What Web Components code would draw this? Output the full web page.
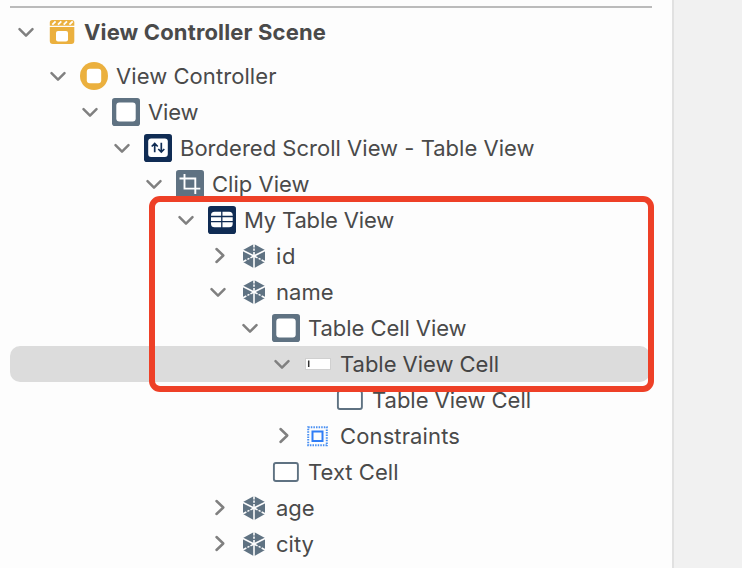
<!DOCTYPE html>
<html lang="en">
<head>
<meta charset="utf-8">
<title>Document Outline</title>
<style>
html,body{margin:0;height:568px;overflow:hidden;background:#fdfdfd}
body{font-family:Inter,"Liberation Sans",sans-serif}
</style>
</head>
<body>
<outline-window></outline-window>
<script>
const SLATE='#5f7282', NAVY='#102c54', GOLD='#ebb03e';
const ICONS={
 scene:`<path fill="${GOLD}" d="M2.800 10H27.300V24a3 3 0 0 1-3 3H5.800a3 3 0 0 1-3-3z"/><path d="M2.800 8.700V5.500a2.500 2.500 0 0 1 2.500-2.500H24.800a2.500 2.500 0 0 1 2.500 2.500V8.700z" fill="${GOLD}"/><path d="M5.300 7.600l3.300-3.200M11 7.600l3.300-3.200M16.700 7.600l3.300-3.200M22.400 7.600l3.300-3.200" stroke="#fdfdfd" stroke-width="1.900"/><rect x="9" y="14" width="12" height="10.500" rx="2" fill="#fff"/>`,
 controller:`<circle cx="15" cy="15" r="14" fill="${GOLD}"/><rect x="7.800" y="7.800" width="14.400" height="14.400" rx="3" fill="#fff"/>`,
 view:`<rect x="1" y="1" width="28" height="28" rx="2.800" fill="${SLATE}"/><rect x="5.300" y="5.500" width="19.400" height="19" rx="3" fill="#fff"/>`,
 scroll:`<rect x="1" y="1" width="28" height="28" rx="2.800" fill="${NAVY}"/><rect x="5.200" y="5.500" width="19.600" height="18.500" rx="3" fill="#fff"/><g fill="none" stroke="${NAVY}" stroke-width="1.700"><path d="M11.700 19.300V11M8.700 13.500l3-3 3 3M18.300 9.700v8.500M15.300 16l3 3 3-3"/></g>`,
 clip:`<rect x="1" y="1" width="28" height="28" rx="2.800" fill="${SLATE}"/><path d="M4.500 9.500H20.300V25M9.500 5v14.600H25.300" fill="none" stroke="#fff" stroke-width="1.900"/>`,
 table:`<rect x="1" y="1" width="28" height="28" rx="2.800" fill="${NAVY}"/><rect x="4" y="6.700" width="21.700" height="15.600" rx="3.500" fill="#fff"/><path d="M14.800 6v17M4 11.500h22M4 16.700h22" stroke="${NAVY}" stroke-width="1.300"/>`,
 cube:`<path d="M15 3l11 6v12l-11 6.300L4 21V9z" fill="${SLATE}"/><g stroke="#fdfdfd" stroke-width="1.600"><path d="M15 15v13M15 15L3.500 9.300M15 15l11.500-5.700"/><path d="M15 15V3M15 15L4 20.700M15 15l11 5.700" stroke-dasharray="4 1.200 2.200 1.200"/></g>`,
 field:`<rect x="2" y="9" width="26" height="12" fill="#d0d0d0"/><rect x="3" y="10" width="24" height="10" fill="#fff"/><path d="M5.700 11.500v6.500" stroke="#333" stroke-width="1.500"/>`,
 cell:`<rect x="2.900" y="6" width="24" height="18" rx="2" fill="#fff" stroke="${SLATE}" stroke-width="1.900"/>`,
 constraints:`<rect x="5.200" y="6.200" width="18.600" height="18" fill="none" stroke="#4a90f2" stroke-width="2" stroke-dasharray="1.500 1.100"/><rect x="9.500" y="10.500" width="10" height="9.500" fill="none" stroke="#2f7df6" stroke-width="2"/>`
};
class OutlineIcon extends HTMLElement{
 connectedCallback(){
  this.attachShadow({mode:'open'}).innerHTML=`<style>:host{display:block;width:30px;height:30px;flex:none}svg{display:block}</style><svg width="30" height="30" viewBox="0 0 30 30">${ICONS[this.getAttribute('name')]}</svg>`;
 }
}
customElements.define('outline-icon',OutlineIcon);
class DisclosureArrow extends HTMLElement{
 connectedCallback(){
  const s=this.getAttribute('state');
  const d={open:'M3.500 7.200l6.500 6.500 6.500-6.500',closed:'M8.500 3l6.800 6.500-6.800 6.500'}[s]||'';
  this.attachShadow({mode:'open'}).innerHTML=`<style>:host{display:block;width:20px;height:20px;flex:none;margin-right:11px}svg{display:block}</style><svg width="20" height="20" viewBox="0 0 20 20"><path d="${d}" fill="none" stroke="#808080" stroke-width="2.500" stroke-linecap="round" stroke-linejoin="round"/></svg>`;
 }
}
customElements.define('disclosure-arrow',DisclosureArrow);
class OutlineRow extends HTMLElement{
 connectedCallback(){
  const a=n=>this.getAttribute(n);
  this.attachShadow({mode:'open'}).innerHTML=`<style>
  :host{display:flex;align-items:center;box-sizing:border-box;height:36px;margin:0 22px 0 10px;padding-left:calc(6px + 32px * ${a('level')});font-size:22px;color:#4a4a4a;border-radius:10px}
  :host([selected]){background:#dcdcdc;color:#454545}
  :host([heading]){height:48px;margin-bottom:2px;font-weight:650}
  span{white-space:pre;margin-left:7px;line-height:36px}
  </style><disclosure-arrow state="${a('state')||''}"></disclosure-arrow><outline-icon name="${a('icon')}"></outline-icon><span><slot></slot></span>`;
  const s=this.shadowRoot.querySelector('span');
  const n=this.textContent.length;
  s.style.letterSpacing=((+a('fit')-s.getBoundingClientRect().width)/n).toFixed(3)+'px';
 }
}
customElements.define('outline-row',OutlineRow);
class OutlineWindow extends HTMLElement{
 connectedCallback(){
  const rows=[
   [0,'open','scene','View Controller Scene',242],[1,'open','controller','View Controller',160.5],
   [2,'open','view','View',50.5],[3,'open','scroll','Bordered Scroll View - Table View',354.5],
   [4,'open','clip','Clip View',97.5],[5,'open','table','My Table View',150],
   [6,'closed','cube','id',20],[6,'open','cube','name',57.5],[7,'open','view','Table Cell View',158.500],
   [8,'open','field','Table View Cell',159],[9,'','cell','Table View Cell',159],
   [8,'closed','constraints','Constraints',120],[7,'','cell','Text Cell',90.5],
   [6,'closed','cube','age',38.500],[6,'closed','cube','city',38]];
  this.attachShadow({mode:'open'}).innerHTML=`<style>
  :host{display:grid;grid-template-columns:672px 1fr;height:568px;position:relative;overflow:hidden}
  aside{background:#f1f1f1;border-left:2px solid #e1e1e1}
  hr{border:0;height:2px;background:#bbb;margin:6px 20px 0 10px;width:642px}
  .mark{position:absolute;left:149px;top:196px;width:505px;height:196px;box-sizing:border-box;border:6px solid #ee4027;border-radius:11px}
  main{min-width:0}
  </style><main><hr>${rows.map((r,i)=>`<outline-row level="${r[0]}" state="${r[1]}" icon="${r[2]}" fit="${r[4]}"${i?'':' heading'}${i==9?' selected':''}>${r[3]}</outline-row>`).join('')}</main><aside></aside><div class="mark"></div>`;
 }
}
customElements.define('outline-window',OutlineWindow);
</script>
</body>
</html>
